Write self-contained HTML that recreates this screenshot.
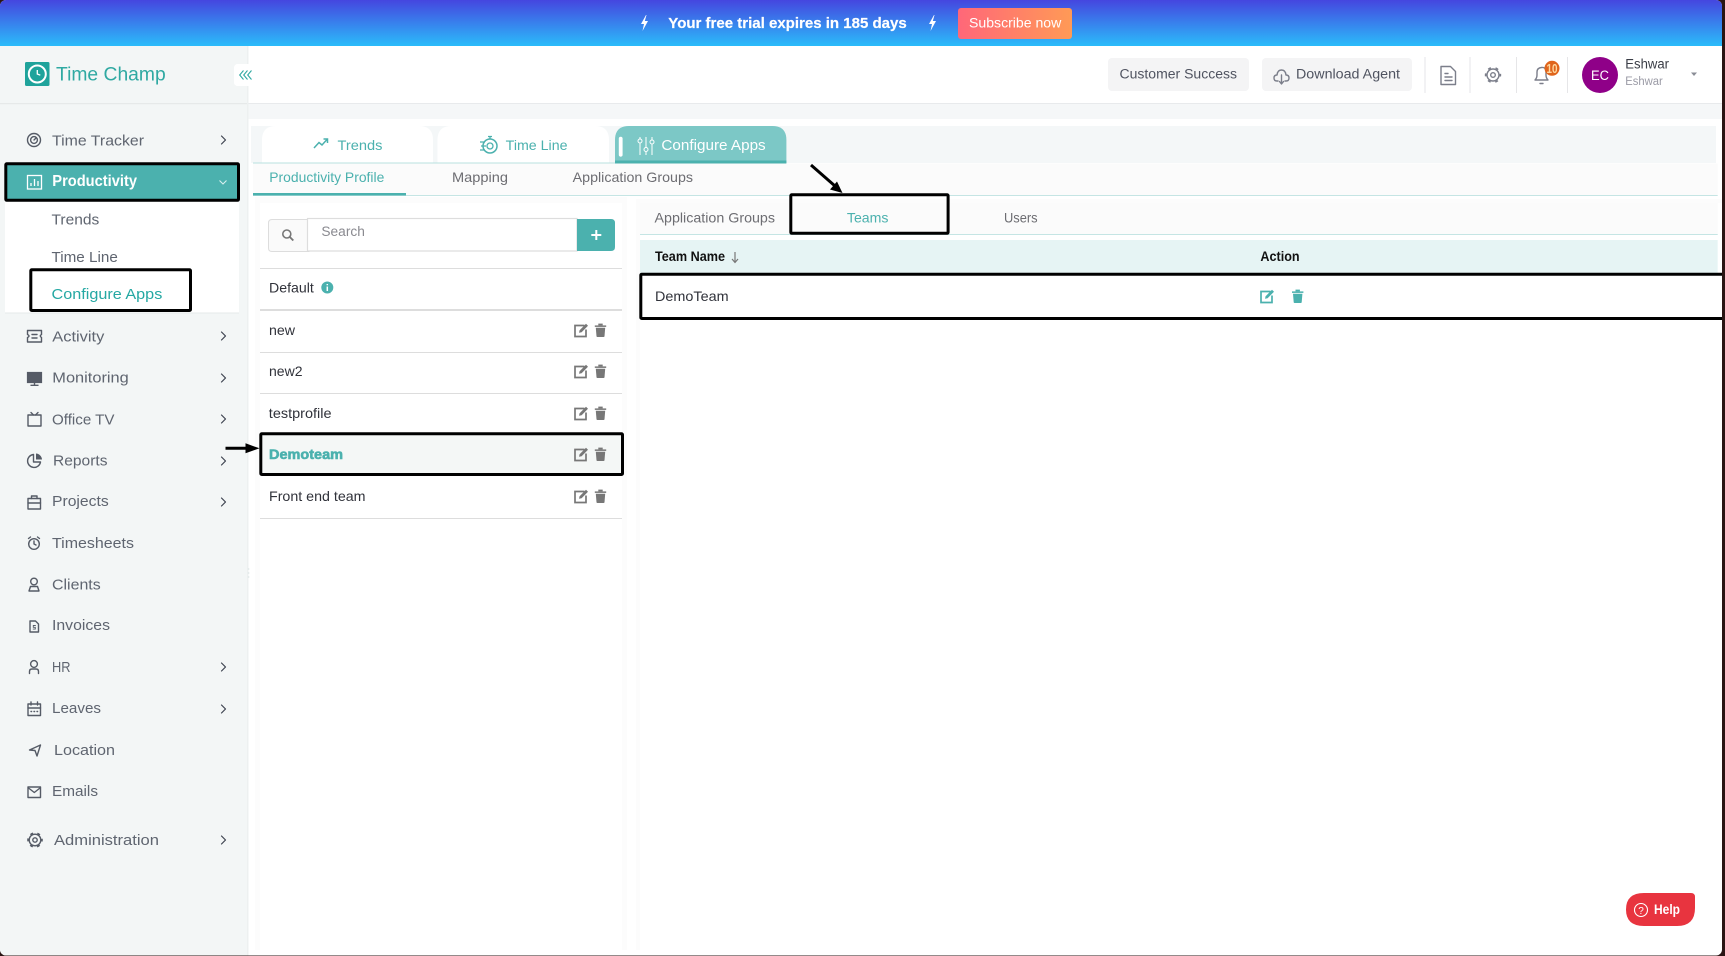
<!DOCTYPE html>
<html lang="en">
<head>
<meta charset="utf-8">
<title>Time Champ - Configure Apps</title>
<style>
html,body{margin:0;padding:0;width:1725px;height:956px;overflow:hidden;background:#2a1514}
svg{display:block;position:absolute;left:0;top:0}
text{font-family:"Liberation Sans",sans-serif}
.n{font-size:15px;fill:#5f6570}
.t{font-size:14px;fill:#6d6d72}
.g{font-size:14px;fill:#4bb1ae}
.l{font-size:14px;fill:#30323a}
.i{fill:none;stroke:#555b66;stroke-width:1.4;stroke-linecap:round;stroke-linejoin:round}
.c{fill:none;stroke:#3d4350;stroke-width:1.2;stroke-linecap:round;stroke-linejoin:round}
.h{fill:none;stroke:#7b7e8a;stroke-width:1.4;stroke-linecap:round;stroke-linejoin:round}
</style>
</head>
<body>
<svg xmlns="http://www.w3.org/2000/svg" width="1725" height="956" viewBox="0 0 1725 956">
<defs>
<linearGradient id="ban" x1="0" y1="0" x2="0" y2="1"><stop offset="0" stop-color="#4546df"/><stop offset="1" stop-color="#2bbcfa"/></linearGradient>
<linearGradient id="sub" x1="0" y1="0" x2="1" y2="0"><stop offset="0" stop-color="#ff6779"/><stop offset="1" stop-color="#ff9a56"/></linearGradient>
<clipPath id="app"><rect x="0" y="0" width="1722" height="955.5" rx="6"/></clipPath>
<g id="ed"><path d="M10.500 2.500H1v11h11V6.500" fill="none" stroke-width="1.700"/><path d="M5 9.800l.6-2.600L12 .8l2 2-6.400 6.400z"/></g>
<g id="tr"><path d="M.3 2.400h11.400v1.500H.3z"/><path d="M3.800 2.400V.6h4.400v1.800z"/><path d="M1.300 4.700h9.400l-.7 8.600q-.1.7-.8.7H2.800q-.7 0-.8-.7z"/></g>
</defs>
<g clip-path="url(#app)">
<!-- page base -->
<rect width="1725" height="956" fill="#fff"/>
<!-- banner -->
<rect width="1725" height="46" fill="url(#ban)"/>
<path d="M646 15l-5 9h3l-1.500 7 5.500-10h-3.200l1.700-6z" fill="#fff"/>
<text x="668.300" y="28" font-size="15" font-weight="700" fill="#fff" stroke="#fff" stroke-width=".2" textLength="238.400" lengthAdjust="spacingAndGlyphs">Your free trial expires in 185 days</text>
<path d="M934 15l-5 9h3l-1.500 7 5.500-10h-3.200l1.700-6z" fill="#fff"/>
<rect x="958" y="8" width="114" height="31" rx="3" fill="url(#sub)"/>
<text x="969" y="27.500" font-size="14" fill="#fff" textLength="92.300" lengthAdjust="spacingAndGlyphs">Subscribe now</text>

<!-- sidebar -->
<rect x="0" y="46" width="247" height="910" fill="#f3f6f6"/>
<rect x="247" y="46" width="1.500" height="910" fill="#edf0f0"/>
<rect x="0" y="103" width="247" height="1.200" fill="#e6e9e9"/>
<!-- header -->
<rect x="248.500" y="103" width="1480" height="1.200" fill="#e8eaec"/>
<rect x="248.500" y="104" width="1480" height="15" fill="#f5f7f8"/>

<!-- logo -->
<rect x="25" y="62" width="24.500" height="24" rx="1.500" fill="#1fa39b"/>
<circle cx="37.300" cy="74" r="8.500" fill="none" stroke="#fff" stroke-width="2"/>
<circle cx="37.300" cy="74" r="6.500" fill="#1fa39b"/>
<path d="M37.300 70v4l3 1.200" fill="none" stroke="#fff" stroke-width="1.300"/>
<text x="56" y="80.500" font-size="19" fill="#2fa9a2" textLength="109.700" lengthAdjust="spacingAndGlyphs">Time Champ</text>
<rect x="234" y="64" width="23" height="22" rx="3.500" fill="#fff"/>
<path d="M243.500 70.500l-3.800 4.500 3.800 4.500M247.500 70.500l-3.800 4.500 3.800 4.500M251.500 70.500l-3.800 4.500 3.800 4.500" fill="none" stroke="#2fa9a2" stroke-width="1.100"/>

<!-- sidebar nav -->
<circle cx="34" cy="140" r="6.500" class="i"/><circle cx="34" cy="140" r="3.400" class="i"/><path d="M34 140l2-2" class="i"/>
<text class="n" x="52" y="145.300" textLength="92" lengthAdjust="spacingAndGlyphs">Time Tracker</text>
<path d="M221.500 136l4 4-4 4" class="c"/>

<rect x="5.800" y="163.800" width="232.700" height="36.500" fill="#4bb1ae" stroke="#000" stroke-width="3" rx="1"/>
<rect x="27.500" y="175.500" width="14" height="13.500" fill="none" stroke="#fff" stroke-width="1.300"/>
<path d="M31 186v-3M34.500 186v-7M38 186v-5" stroke="#fff" stroke-width="1.300" fill="none"/>
<text x="52.300" y="186" font-size="15.500" font-weight="700" fill="#fff" textLength="84.700" lengthAdjust="spacingAndGlyphs">Productivity</text>
<path d="M219.500 180.500l3.500 3.500 3.500-3.500" fill="none" stroke="#d8f0ef" stroke-width="1.100"/>

<rect x="5" y="202" width="234" height="110.700" fill="#fff"/>
<rect x="5" y="312.500" width="234" height="1" fill="#e6e9e9"/>
<text class="n" x="51.500" y="224.300" textLength="47.800" lengthAdjust="spacingAndGlyphs">Trends</text>
<text class="n" x="51.500" y="262" textLength="66.300" lengthAdjust="spacingAndGlyphs">Time Line</text>
<text x="51.500" y="299" font-size="15" fill="#25a8a3" textLength="110.800" lengthAdjust="spacingAndGlyphs">Configure Apps</text>
<rect x="30.800" y="269.800" width="159.700" height="40.700" fill="none" stroke="#000" stroke-width="3" rx="1"/>

<path d="M27.500 330.500h14v4q-2.500 1.500 0 3v4.500h-14v-4.500q3-1.500 0-3z" class="i"/><path d="M32 334.500h5M32 338h5" class="i"/>
<text class="n" x="52.300" y="341.300" textLength="52" lengthAdjust="spacingAndGlyphs">Activity</text>
<path d="M221.500 332l4 4-4 4" class="c"/>

<rect x="27.500" y="372.500" width="14" height="10" fill="#555b66" stroke="#555b66" stroke-width="1.200"/><path d="M31 385.300h7M34.500 383v2" class="i"/>
<text class="n" x="52.300" y="382.500" textLength="76.500" lengthAdjust="spacingAndGlyphs">Monitoring</text>
<path d="M221.500 374l4 4-4 4" class="c"/>

<rect x="28" y="415" width="13" height="11" class="i"/><path d="M31 412.500l2.500 2.500M38 412.500l-2.500 2.500" class="i"/>
<text class="n" x="52" y="424.500" textLength="62.500" lengthAdjust="spacingAndGlyphs">Office TV</text>
<path d="M221.500 415l4 4-4 4" class="c"/>

<path d="M33.500 454.500a6.500 6.500 0 1 0 7 7.500h-7z" class="i"/><path d="M36 453.500a6.500 6.500 0 0 1 6 6h-6z" fill="#555b66"/>
<text class="n" x="53" y="465.300" textLength="54.500" lengthAdjust="spacingAndGlyphs">Reports</text>
<path d="M221.500 457l4 4-4 4" class="c"/>

<rect x="28" y="498.500" width="12.500" height="10.500" class="i"/><path d="M31.500 498.500v-2.500h5.500v2.500M28 503h12.500" class="i"/>
<text class="n" x="52" y="506" textLength="56.700" lengthAdjust="spacingAndGlyphs">Projects</text>
<path d="M221.500 498l4 4-4 4" class="c"/>

<circle cx="34" cy="544" r="5.300" class="i"/><path d="M34 541v3l2 1M28.500 538.500l2-1.500M39.500 538.500l-2-1.500" class="i"/>
<text class="n" x="52" y="548" textLength="82" lengthAdjust="spacingAndGlyphs">Timesheets</text>

<circle cx="34" cy="581.500" r="3.300" class="i"/><path d="M29 591l1.500-4.500h7l1.500 4.500z" class="i"/>
<text class="n" x="52" y="589.500" textLength="48.700" lengthAdjust="spacingAndGlyphs">Clients</text>

<path d="M30 621h5.500l3 3v8H30z" class="i"/><path d="M35.800 625.500h-2.500v1.800h2v1.800h-2.500" fill="none" stroke="#555b66" stroke-width=".9"/>
<text class="n" x="52" y="630" textLength="58" lengthAdjust="spacingAndGlyphs">Invoices</text>

<circle cx="34" cy="664" r="3.400" class="i"/><path d="M29.500 673.500v-2q0-2.500 2.500-2.500h4q2.500 0 2.500 2.500v2" class="i"/>
<text x="52" y="672" font-size="15" fill="#5f6570" textLength="18.500" lengthAdjust="spacingAndGlyphs">HR</text>
<path d="M221.500 663l4 4-4 4" class="c"/>

<rect x="28" y="704" width="12.500" height="11.500" class="i"/><path d="M28 708h12.500M31 702v3M37.500 702v3M31 711.500h.6M34 711.500h.6M37 711.500h.6" class="i"/>
<text class="n" x="52" y="713" textLength="49" lengthAdjust="spacingAndGlyphs">Leaves</text>
<path d="M221.500 705l4 4-4 4" class="c"/>

<path d="M29.500 750l11-5-3.500 11-2-5.500z" class="i" stroke-width="1.100"/>
<text class="n" x="54" y="755" textLength="61" lengthAdjust="spacingAndGlyphs">Location</text>

<rect x="28" y="787" width="12.500" height="10.500" class="i" stroke-width="1.500"/><path d="M28.500 788l5.800 4.500 5.700-4.500" class="i"/>
<text class="n" x="52" y="796" textLength="46" lengthAdjust="spacingAndGlyphs">Emails</text>

<circle cx="35" cy="840" r="5.800" class="i"/><circle cx="35" cy="840" r="7" fill="none" stroke="#555b66" stroke-width="1.600" stroke-dasharray="3 4.330" stroke-dashoffset="1.500"/><circle cx="35" cy="840" r="2.200" class="i"/>
<text class="n" x="54" y="845" textLength="105" lengthAdjust="spacingAndGlyphs">Administration</text>
<path d="M221.500 836l4 4-4 4" class="c"/>

<path d="M248.500 568v2M248.500 572v2M248.500 576v2" stroke="#e6ecec" stroke-width="1.500"/>

<!-- header right -->
<rect x="1108" y="58" width="141" height="33" rx="4" fill="#f4f4f5"/>
<text x="1119.500" y="78.300" font-size="13.500" fill="#4f5360" textLength="117.500" lengthAdjust="spacingAndGlyphs">Customer Success</text>
<rect x="1262" y="58" width="150" height="33" rx="4" fill="#f4f4f5"/>
<path d="M1278 81h-1q-3 0-3-3t3-3q.5-5 4.500-5t4.500 5q3 0 3 3t-3 3h-1M1281.500 75v8.500M1279.500 81.500l2 2.500 2-2.500" class="h" stroke-width="1.100"/>
<text x="1296" y="78.300" font-size="13.500" fill="#4f5360" textLength="104" lengthAdjust="spacingAndGlyphs">Download Agent</text>
<path d="M1425 57v36M1470 57v36M1516.500 57v36M1567.500 57v36" stroke="#e6e6e8" stroke-width="1"/>
<path d="M1441 66.500h9.500l5 5v13h-14.500z" class="h" stroke-width="1.600"/><path d="M1445 73.500h3M1445 77h7M1445 80.500h7" class="h"/>
<circle cx="1493" cy="75" r="6" class="h"/><circle cx="1493" cy="75" r="7.400" fill="none" stroke="#7b7e8a" stroke-width="1.600" stroke-dasharray="3 4.750" stroke-dashoffset="1.500"/><circle cx="1493" cy="75" r="2.300" class="h"/>
<path d="M1535 80q2-2 2-5v-3q0-4 4.500-4.500t4.500 4.500v3q0 3 2 5z" class="h"/><path d="M1540 83.500h3" class="h"/>
<circle cx="1552" cy="68.300" r="7.500" fill="#e0651c"/>
<text x="1546.500" y="73" font-size="12.500" font-weight="700" fill="#ffd9a0" textLength="11" lengthAdjust="spacingAndGlyphs">10</text>
<circle cx="1600" cy="75" r="18" fill="#8f0088"/>
<text x="1591" y="80" font-size="13.500" fill="#fff" textLength="18" lengthAdjust="spacingAndGlyphs">EC</text>
<text x="1625.300" y="68.300" font-size="13.500" fill="#3a3d46" textLength="43.700" lengthAdjust="spacingAndGlyphs">Eshwar</text>
<text x="1625.300" y="85" font-size="11.500" fill="#9a9aa5" textLength="37.500" lengthAdjust="spacingAndGlyphs">Eshwar</text>
<path d="M1691 72.500h6l-3 3.500z" fill="#8a8d96"/>

<!-- top tabs -->
<rect x="251" y="126" width="1465" height="37" fill="#f4f7f8"/>
<path d="M262 162.500V140q0-14 14-14h143q14 0 14 14v22.500z" fill="#fff"/>
<path d="M437.500 162.500V140q0-14 14-14h143.500q14 0 14 14v22.500z" fill="#fff"/>
<path d="M615 163V140q0-14 14-14h143.400q14 0 14 14v23z" fill="#7cc8c6"/>
<rect x="615" y="160.500" width="171.400" height="3" fill="#4bb1ae"/>
<rect x="618.800" y="136.700" width="3.800" height="20" rx="1.900" fill="#fff"/>
<path d="M314 148l5-5.500 3 2.500 5-5.500M323.500 139h4v4" fill="none" stroke="#4bb1ae" stroke-width="1.500"/>
<text class="g" x="337.500" y="150" textLength="45" lengthAdjust="spacingAndGlyphs">Trends</text>
<circle cx="490" cy="146" r="7" fill="none" stroke="#4bb1ae" stroke-width="1.500"/><circle cx="490" cy="146" r="3" fill="none" stroke="#4bb1ae" stroke-width="1.300"/><path d="M480 142h5M481 146h5M480 150h5M488 136.500h4M490 137v2" stroke="#4bb1ae" stroke-width="1.300" fill="none"/>
<text class="g" x="505.700" y="150" textLength="61.800" lengthAdjust="spacingAndGlyphs">Time Line</text>
<path d="M640 137v18M646 137v18M652 137v18" stroke="#fff" stroke-width="1"/>
<circle cx="640" cy="141" r="2" fill="#7cc8c6" stroke="#fff"/><circle cx="646" cy="149.500" r="2" fill="#7cc8c6" stroke="#fff"/><circle cx="652" cy="142" r="2" fill="#7cc8c6" stroke="#fff"/>
<text x="661.400" y="150" font-size="14.500" fill="#fff" textLength="104.300" lengthAdjust="spacingAndGlyphs">Configure Apps</text>
<rect x="253" y="162.500" width="362" height="1" fill="#b8e0df"/>

<!-- sub tabs -->
<rect x="253" y="163.500" width="1464.700" height="31.500" fill="#fbfbfb"/>
<rect x="253" y="195" width="1464.700" height="1" fill="#c5e5e4"/>
<rect x="253" y="193" width="153" height="2.500" fill="#4bb1ae"/>
<text class="g" x="269.300" y="182" textLength="115" lengthAdjust="spacingAndGlyphs">Productivity Profile</text>
<text class="t" x="452" y="182" textLength="56" lengthAdjust="spacingAndGlyphs">Mapping</text>
<text class="t" x="572.700" y="182" textLength="120.300" lengthAdjust="spacingAndGlyphs">Application Groups</text>

<!-- left panel -->
<rect x="255" y="197" width="372" height="753" fill="#fcfcfc"/>
<rect x="260" y="203" width="362" height="747" fill="#fff"/>
<path d="M272 219.500h37v32h-37q-3.500 0-3.500-3.500v-25q0-3.500 3.500-3.500z" fill="#fafafa" stroke="#ddd"/>
<circle cx="286.800" cy="234" r="4" fill="none" stroke="#777" stroke-width="1.600"/><path d="M289.800 237l3.500 3.500" stroke="#777" stroke-width="1.900"/>
<rect x="307.500" y="218.500" width="269.500" height="32.500" fill="#fff" stroke="#ddd" stroke-width="1.200"/>
<text x="321.400" y="236" font-size="13.500" fill="#8a8a90" textLength="43.500" lengthAdjust="spacingAndGlyphs">Search</text>
<path d="M577 219h34q4 0 4 4v24q0 4-4 4h-34z" fill="#4bb1ae"/>
<path d="M596.300 230v10M591.300 235h10" stroke="#fff" stroke-width="2"/>
<rect x="260" y="268" width="362" height="1" fill="#ddd"/>
<text class="l" x="269" y="292.300" textLength="44.800" lengthAdjust="spacingAndGlyphs">Default</text>
<circle cx="327.300" cy="287.500" r="6" fill="#4bb1ae"/><path d="M327.300 284v1.200M327.300 286.500v4.500" stroke="#fff" stroke-width="1.500"/>
<rect x="260" y="309" width="362" height="2" fill="#ddd"/>
<text class="l" x="269" y="335.200" textLength="26" lengthAdjust="spacingAndGlyphs">new</text>
<rect x="260" y="352" width="362" height="1" fill="#ddd"/>
<text class="l" x="269" y="376.200" textLength="33.500" lengthAdjust="spacingAndGlyphs">new2</text>
<rect x="260" y="393" width="362" height="1" fill="#ddd"/>
<text class="l" x="268.800" y="418.200" textLength="62.700" lengthAdjust="spacingAndGlyphs">testprofile</text>
<rect x="260.800" y="433.800" width="361.700" height="40.700" fill="#f4f7f6" stroke="#000" stroke-width="3" rx="1"/>
<text x="269" y="459" font-size="14" font-weight="700" fill="#4bb1ae" stroke="#4bb1ae" stroke-width=".6" textLength="74" lengthAdjust="spacingAndGlyphs">Demoteam</text>
<text class="l" x="269" y="501.200" textLength="96.500" lengthAdjust="spacingAndGlyphs">Front end team</text>
<rect x="260" y="518" width="362" height="1" fill="#ddd"/>
<use href="#ed" x="574" y="323" fill="#777" stroke="#777" stroke-width="0"/>
<use href="#tr" x="594.500" y="323" fill="#777"/>
<use href="#ed" x="574" y="364" fill="#777" stroke="#777" stroke-width="0"/>
<use href="#tr" x="594.500" y="364" fill="#777"/>
<use href="#ed" x="574" y="406" fill="#777" stroke="#777" stroke-width="0"/>
<use href="#tr" x="594.500" y="406" fill="#777"/>
<use href="#ed" x="574" y="447" fill="#777" stroke="#777" stroke-width="0"/>
<use href="#tr" x="594.500" y="447" fill="#777"/>
<use href="#ed" x="574" y="489" fill="#777" stroke="#777" stroke-width="0"/>
<use href="#tr" x="594.500" y="489" fill="#777"/>

<!-- right panel -->
<rect x="636" y="199" width="1086" height="751" fill="#fcfcfc"/>
<rect x="640" y="203" width="1082" height="747" fill="#fff"/>
<rect x="640" y="203" width="1077.700" height="31" fill="#fbfbfb"/>
<rect x="640" y="234" width="1077.700" height="1" fill="#c5e5e4"/>
<text class="t" x="654.500" y="222.500" textLength="120.500" lengthAdjust="spacingAndGlyphs">Application Groups</text>
<text class="g" x="846.900" y="222.500" textLength="41.600" lengthAdjust="spacingAndGlyphs">Teams</text>
<text class="t" x="1004" y="222.500" textLength="33.600" lengthAdjust="spacingAndGlyphs">Users</text>
<rect x="790.800" y="194.800" width="157.300" height="38.500" fill="none" stroke="#000" stroke-width="3" rx="1"/>
<rect x="640" y="240" width="1077.700" height="33" fill="#e6f4f4"/>
<text x="655" y="261" font-size="13.500" font-weight="700" fill="#111" textLength="70" lengthAdjust="spacingAndGlyphs">Team Name</text>
<path d="M735 252v10M732 259l3 3.500 3-3.500" fill="none" stroke="#777" stroke-width="1.200"/>
<text x="1260.400" y="261" font-size="13.500" font-weight="700" fill="#111" textLength="39.200" lengthAdjust="spacingAndGlyphs">Action</text>
<rect x="640.800" y="274.200" width="1090" height="44.300" fill="#fff" stroke="#000" stroke-width="3" rx="1"/>
<text class="l" x="655" y="301" textLength="73.600" lengthAdjust="spacingAndGlyphs">DemoTeam</text>
<use href="#ed" x="1260" y="289" fill="#4bb1ae" stroke="#4bb1ae" stroke-width="0"/>
<use href="#tr" x="1291.700" y="289" fill="#4bb1ae"/>

<!-- annotation arrows -->
<path d="M811 165l24 21" stroke="#000" stroke-width="3" fill="none"/>
<path d="M842.500 193l-12.500-3.500 7-8z" fill="#000"/>
<path d="M225.500 448.300h22" stroke="#000" stroke-width="3" fill="none"/>
<path d="M259.500 448.300l-14-5v10z" fill="#000"/>

<!-- help -->
<path d="M1644 893h47q4 0 4 4v11q0 18-18 18h-33q-18 0-18-16.500t18-16.500z" fill="#e8343f"/>
<circle cx="1641" cy="910" r="6.500" fill="none" stroke="#fff" stroke-width="1.100"/>
<text x="1638.200" y="913.800" font-size="10" fill="#fff">?</text>
<text x="1654" y="914" font-size="13.500" font-weight="700" fill="#fff" textLength="26" lengthAdjust="spacingAndGlyphs">Help</text>
</g>
</svg>
</body>
</html>
